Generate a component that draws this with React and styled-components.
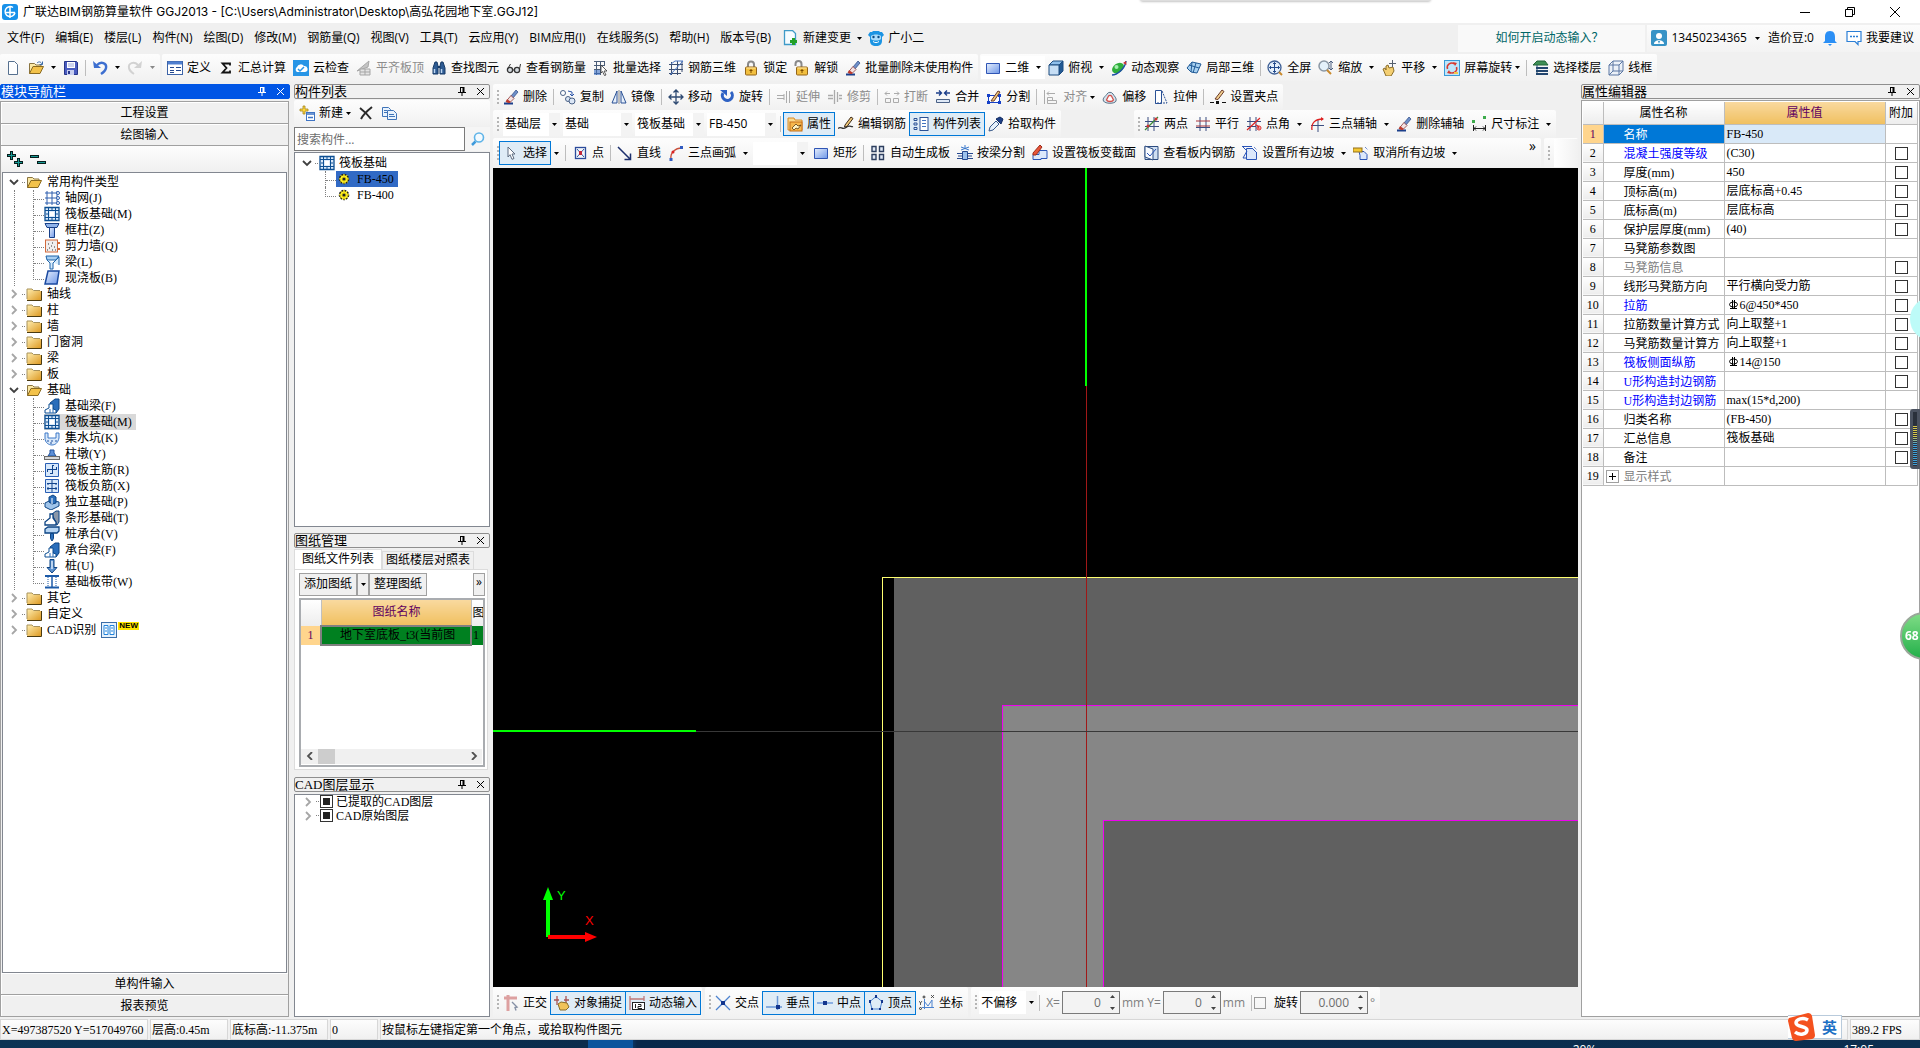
import React from "react";
import styled, { createGlobalStyle, css } from "styled-components";

const GlobalStyle = createGlobalStyle`
  * {
    box-sizing: border-box;
  }

  body {
    margin: 0;
    background: #f0f0f0;
    color: #000;
    font-family: "Open Sans", "Noto Sans CJK SC", sans-serif;
    font-size: 12px;
    line-height: 16px;
    overflow: hidden;
  }

  button, input, select {
    font: inherit;
    color: inherit;
    margin: 0;
    padding: 0;
    border: 0;
    border-radius: 0;
    background: none;
  }
`;

const songti = `"Liberation Serif", "Noto Sans CJK SC", serif`;
const captionFont = `Inter, "Noto Sans CJK SC", sans-serif`;

/* ---------- icons ---------- */

const page = <path d="M3.5 1.5h6l3 3v10h-9z" fill="#fdfeff" stroke="#56708f" />;
const brush = (
  <>
    <path d="M1 14.5h9" stroke="#1b3f8b" strokeWidth="2" />
    <path d="M13 1l2 2-5 6-2-2z" fill="#6e8fc9" stroke="#29467f" strokeWidth=".7" />
    <path d="M8 6.500l3 3-4 4-4-1z" fill="#f4e3e3" stroke="#8b3b3b" strokeWidth=".8" />
    <path d="M4 10l4 3-2 1-3-1z" fill="#c0392b" />
  </>
);
const gridLines = <path d="M3 1v14M8 1v14M13 1v14M1 3h14M1 8h14M1 13h14" stroke="#2e5fae" fill="none" />;
const raft = (
  <>
    <path d="M1 1.500h14v13H1z" fill="#dcebfb" stroke="#0d4f93" strokeWidth="1.300" />
    <path d="M4.500 1v14M11.500 1v14M1 4.500h14M1 11.500h14" stroke="#0d4f93" />
    <path d="M6 6h4v4H6z" fill="#fff" />
    <path d="M8 2v2M8 12v2M2 8h2M12 8h2" stroke="#0d4f93" />
  </>
);
const beam = (
  <>
    <path d="M6 5l5-4h4v10l-3 4z" fill="#2a6ebb" stroke="#0d4484" />
    <path d="M5 6h4v5l3 1v3H1v-3l4-2z" fill="#fff" stroke="#0d4f93" />
    <path d="M6 15v-4M9 15v-4" stroke="#2a6ebb" />
  </>
);
const padlock = (shackle) => (
  <>
    <path d={shackle} fill="none" stroke="#8a8a8a" strokeWidth="2" />
    <rect x="2.500" y="7" width="11" height="8" rx="1" fill="#f2bf3f" stroke="#94651a" />
    <path d="M8 9v4M6.500 10.500h3" stroke="#7a4a00" />
    <path d="M3.500 8h9" stroke="#ffe9a8" />
  </>
);
const openFolder = (
  <>
    <path d="M1.500 13.500v-10h5l1.500 1.500h5v2" fill="#fbe9a6" stroke="#8a7440" />
    <path d="M1.500 13.500L5 6.500h10.500l-3.500 7z" fill="#f3c24a" stroke="#8a6a20" />
  </>
);
const closedFolder = (
  <>
    <path d="M1 3h5l1.500 2H15v9H1z" fill="url(#folderFill)" />
    <path d="M1 13V3h5l1.500 1.500H14" fill="none" stroke="#a8925a" />
    <path d="M1 14.500h14.500V5" fill="none" stroke="#4a3a10" />
  </>
);

const icons = {
  app: (
    <>
      <rect x="0" y="0" width="16" height="16" rx="3" fill="#1791ea" />
      <path d="M8 2v12M3 8.500h10M11 3.500a5 5 0 1 0 2 5" fill="none" stroke="#fff" strokeWidth="1.500" />
    </>
  ),
  newFile: page,
  open: (
    <>
      {openFolder}
      <path d="M9 3c2-2 4-1 5 1M14.500 1.500V4.500h-3" fill="none" stroke="#3c6ba6" />
    </>
  ),
  save: (
    <>
      <path d="M1.500 1.500h12l1 1v12h-13z" fill="#4a5cc0" stroke="#27368a" />
      <rect x="4" y="2" width="8" height="6" fill="#fff" />
      <path d="M5 4h6M5 6h6" stroke="#9aa6dd" />
      <rect x="4" y="10" width="7" height="5" fill="#c8cff0" />
      <path d="M6 11v3" stroke="#27368a" strokeWidth="2" />
    </>
  ),
  undo: (
    <>
      <path d="M1 1l1 7h7z" fill="#3d6fd0" />
      <path d="M5 5c4-4 10-2 9 3-.5 3-2 4-5 6" fill="none" stroke="#3d6fd0" strokeWidth="2.400" />
    </>
  ),
  redo: (
    <>
      <path d="M15 1l-1 7H7z" fill="#d2d2d2" />
      <path d="M11 5C7 1 1 3 2 8c.5 3 2 4 5 6" fill="none" stroke="#d2d2d2" strokeWidth="2" />
    </>
  ),
  define: (
    <>
      <rect x=".5" y="1.500" width="15" height="13" fill="#fff" stroke="#3d64a8" />
      <path d="M1 3h14" stroke="#4f7fd0" strokeWidth="3" />
      <path d="M3 7.500h4M3 10.500h4M9 7.500h5M9 10.500h5M3 12.500h4" stroke="#24498f" />
    </>
  ),
  sigma: <path d="M12 5.500V3.500H4.500L8.500 8l-4 4.500H12v-2" fill="none" stroke="#111" strokeWidth="1.800" />,
  cloud: (
    <>
      <rect width="16" height="16" fill="#2795e6" />
      <path d="M4 12a3 3 0 0 1 0-5 4 4 0 0 1 7-1 3 3 0 0 1 1 6z" fill="#fff" />
      <path d="M5 9l2 2 4-4" fill="none" stroke="#2795e6" strokeWidth="1.500" />
    </>
  ),
  flatTop: (
    <>
      <path d="M1 11L13 1l-1 6z" fill="#c4c4c4" stroke="#a8a8a8" />
      <path d="M4 15V9h10v6zM4 12h10M9 9v6" fill="#e4e4e4" stroke="#a5a5a5" />
    </>
  ),
  find: (
    <>
      <path d="M4 2h2l1 4v8H2V8zM12 2h-2L9 6v8h5V8z" fill="#2e5b93" stroke="#163a66" />
      <path d="M3.500 9v4M10.500 9v4" stroke="#bdd6f2" strokeWidth="1.500" />
      <path d="M7 7h2" stroke="#163a66" strokeWidth="2" />
    </>
  ),
  glasses: (
    <>
      <circle cx="4" cy="10" r="2.600" fill="#d5dbe0" stroke="#333" strokeWidth="1.300" />
      <circle cx="11" cy="10" r="2.600" fill="#d5dbe0" stroke="#333" strokeWidth="1.300" />
      <path d="M1.500 9l3-5M13.500 9l1-5M6.500 10h2" fill="none" stroke="#333" />
    </>
  ),
  batchSelect: (
    <>
      <path d="M1 1.500h11M1 5.500h11M1 9.500h7M1 13.500h7M3.500 1v14M7.500 1v14M11.500 1v5" stroke="#4b5d78" />
      <path d="M1 10h6v5H1z" fill="#3b70c4" opacity=".6" />
      <path d="M8 5l6 6h-3l2 4-1.500.5-2-4L8 13z" fill="#fff" stroke="#333" strokeWidth=".8" />
    </>
  ),
  rebar3d: (
    <>
      <path d="M1 4.500h14M1 9.500h14M1 13.500h12M3.500 2v13M9.500 1v14M14 1v11" stroke="#3c4f72" />
      <path d="M2 15L15 1M3 4L7 1h8" fill="none" stroke="#4c78c4" />
    </>
  ),
  lock: padlock("M5 8V4.500a3 3 0 0 1 6 0V8"),
  unlock: padlock("M1.500 6V4a3 3 0 0 1 6 0V8"),
  brush,
  rect: <path d="M1.500 3.500h13v10h-13z" fill="url(#blueFill)" stroke="#2f55b5" />,
  cube: (
    <>
      <path d="M1 5l4-4h10l-4 4z" fill="#8fc0ec" stroke="#1d4c80" />
      <path d="M11 5l4-4v10l-4 4z" fill="#245a94" stroke="#1d4c80" />
      <path d="M1 5h10v10H1z" fill="#c6def5" stroke="#1d4c80" />
    </>
  ),
  orbit: (
    <>
      <ellipse cx="7" cy="8" rx="6.500" ry="4.500" transform="rotate(-35 7 8)" fill="#2fae3c" />
      <circle cx="5.500" cy="7" r="2" fill="#a7eeb0" />
      <path d="M1 15C6 15 14 9 15 1" fill="none" stroke="#1e4ea8" strokeWidth="1.500" />
      <path d="M12 3l3-2 .5 4z" fill="#c33" />
    </>
  ),
  part3d: (
    <>
      <path d="M1 8l5-6 9 2-4 9-6-1z" fill="#a8d1f1" stroke="#205a96" />
      <path d="M6 2L5 12M10 3l-3 10M3 5l10 3" stroke="#205a96" fill="none" />
    </>
  ),
  fullscreen: (
    <>
      <circle cx="7.500" cy="7.500" r="6.500" fill="#e4effa" stroke="#3e5f95" strokeWidth="1.300" />
      <path d="M7.500 2.500v10M2.500 7.500h10M6 4l1.500-1.500L9 4M6 11l1.500 1.500L9 11M4 6L2.500 7.500 4 9M11 6l1.500 1.500L11 9" fill="none" stroke="#234a8c" />
      <path d="M12 12l3 3" stroke="#c98a2d" strokeWidth="2" />
    </>
  ),
  zoom: (
    <>
      <circle cx="6" cy="6" r="5" fill="#e4f1fa" stroke="#8b98a5" strokeWidth="1.500" />
      <path d="M9 10l4 4" stroke="#c98a2d" strokeWidth="2" />
      <path d="M13 1v9M11 3l2-2 2 2M11 8l2 2 2-2" fill="none" stroke="#4a5f80" />
    </>
  ),
  pan: (
    <>
      <path d="M2 9l2-1 1 2V6l2-1 1 3 4-1 1 4-3 5H5z" fill="#f4cf72" stroke="#8a6d28" />
      <path d="M11.500 0v7M8 3.500h7" stroke="#55606e" />
    </>
  ),
  rotateScreen: (
    <>
      <rect x=".5" y=".5" width="15" height="15" fill="#bfe6fb" stroke="#3a9bd8" />
      <path d="M3.500 9a4.500 4.500 0 0 1 7-5M12.500 7a4.500 4.500 0 0 1-7 5" fill="none" stroke="#d8392f" strokeWidth="1.500" />
      <path d="M9 2l4 1-2 3zM7 14l-4-1 2-3z" fill="#d8392f" />
      <path d="M10 12h4v2h-4z" fill="#f1c84c" />
    </>
  ),
  floors: (
    <>
      <path d="M0 5l4-4h8l3 4z" fill="#3f8f55" stroke="#236438" />
      <path d="M3 8h12M3 11h12M3 14h12" stroke="#23466f" strokeWidth="2" />
      <path d="M4 5v10" stroke="#23466f" />
    </>
  ),
  wire: (
    <path d="M1 5h10v10H1zM5 1h10v10H5zM1 5l4-4M11 5l4-4M11 15l4-4M1 15l4-4" fill="#e4edf8" fillOpacity=".6" stroke="#5a77a3" />
  ),
  copy: (
    <>
      <circle cx="3" cy="4" r="2.500" fill="#fff" stroke="#4a6186" />
      <circle cx="8" cy="10" r="2.500" fill="#dbe6f5" stroke="#4a6186" />
      <circle cx="12" cy="12" r="3" fill="#dbe6f5" stroke="#4a6186" />
      <path d="M8 2l4 1v3M10 5l2 2 2-2" fill="none" stroke="#2c55a8" />
    </>
  ),
  mirror: (
    <>
      <path d="M6 2v12H1zM10 2v12h5z" fill="#e7f0fb" stroke="#2a5195" />
      <path d="M8 1v14" stroke="#888" />
    </>
  ),
  move: <path d="M8 1v14M1 8h14M5.500 3.500L8 1l2.500 2.500M5.500 12.500L8 15l2.500-2.500M3.500 5.500L1 8l2.500 2.500M12.500 5.500L15 8l-2.500 2.500" fill="none" stroke="#2e4a72" strokeWidth="1.300" />,
  rotate: (
    <>
      <path d="M4 4a5 5 0 1 0 8-1" fill="none" stroke="#2f62c4" strokeWidth="3" />
      <path d="M1 1h7v6z" fill="#2f62c4" />
    </>
  ),
  extend: <path d="M1 6.500h7M1 9.500h7M8 5v6M10.500 2v12M13.500 2v12" fill="none" stroke="#ababab" />,
  trim: <path d="M1 6.500h5M1 9.500h5M7.500 1v14M10.500 3v10M12 6.500h3M12 9.500h3" fill="none" stroke="#ababab" strokeWidth="1.300" />,
  split: (
    <path d="M1 4.500h5M10 4.500h5M3 2.500L1 4.500l2 2M13 2.500l2 2-2 2M1.500 9.500h5v4h-5zM9.500 9.500h5v4h-5z" fill="none" stroke="#ababab" />
  ),
  merge: (
    <>
      <path d="M1 4h5M10 4h5M4 1.500L6.500 4 4 6.500M12 1.500L9.500 4 12 6.500" fill="none" stroke="#1d3f8a" strokeWidth="1.400" />
      <path d="M1.500 10.500h13v3h-13z" fill="#dfe9f7" stroke="#4a6186" />
    </>
  ),
  cut: (
    <>
      <path d="M2.500 6.500h11v7h-11z" fill="#fff" stroke="#1540c8" />
      <path d="M1 5h3v3H1zM12 5h3v3h-3zM1 12h3v3H1zM12 12h3v3h-3z" fill="#1540c8" />
      <path d="M5 12l7-10 2 1-6 9z" fill="#f0c878" stroke="#6b3a2a" />
    </>
  ),
  align: <path d="M1.500 1v14M4 4.500h8M6 2.500l-2 2 2 2M4.500 8.500h5v3h-5zM4.500 11.500h9v3h-9z" fill="none" stroke="#ababab" />,
  offset: (
    <>
      <path d="M5 5a3.500 3.500 0 0 1 6 0c1 2 4 4 3 7s-11 3-12.500 0S4 7 5 5z" fill="#d6e4ee" stroke="#5b7489" />
      <path d="M6.500 7a2 2 0 0 1 3 0l2 4c-1 2-6 2-7 0z" fill="#fff" stroke="#d2504b" strokeWidth="1.300" />
    </>
  ),
  stretch: (
    <>
      <path d="M2.500 1.500h6v13h-6z" fill="#fff" stroke="#2a5195" />
      <path d="M9 2l5 12H2" fill="none" stroke="#2a5195" strokeDasharray="2 1" />
    </>
  ),
  gripPoint: (
    <>
      <path d="M0 13.500h4M12 13.500h4" stroke="#111" />
      <rect x="6" y="12" width="3" height="3" fill="#111" />
      <path d="M5 10l7-9 2 1.500-6 8z" fill="#f1cf8e" stroke="#6b3a2a" />
    </>
  ),
  property: (
    <>
      <path d="M1 2h6l1 2h7v10H1z" fill="#fbd98b" stroke="#d88a28" />
      <rect x="3" y="6" width="12" height="9" fill="#f6b84e" stroke="#c66e16" />
      <path d="M5 12l4-4 2 2 3-1-3 4-2-1-2 2z" fill="#fff4c4" stroke="#5d3a0c" strokeWidth=".8" />
    </>
  ),
  pencil: (
    <>
      <path d="M0 12.500c3-3 4 2 8-1s5 0 7-1" fill="none" stroke="#333" strokeWidth="1.300" />
      <path d="M7 9l6-8 2 1.500-6 8-2.500.5z" fill="#f0c878" stroke="#3c2a1a" />
    </>
  ),
  list: (
    <>
      <path d="M1 2.500h3v2H1zM1 7h3v2H1zM1 11.500h3v2H1z" fill="none" stroke="#2a5195" />
      <rect x="7" y="1.500" width="8" height="13" fill="#fff" stroke="#2a5195" />
      <path d="M9 4.500h4M9 7.500h4M9 10.500h4" stroke="#4273c0" />
    </>
  ),
  dropper: (
    <>
      <path d="M1 15l1-4 6-6 3 3-6 6z" fill="#e7f1fb" stroke="#3a5a8a" />
      <path d="M8 3l5 5 2-5-3-2z" fill="#1f4288" stroke="#122b60" />
    </>
  ),
  twoPoint: (
    <>
      <path d="M4 1v14M10 1v14M1 5.500h14M1 10.500h14" stroke="#3a4d80" />
      <path d="M1 14L14 1" stroke="#3b8a35" strokeWidth="1.300" />
      <circle cx="4" cy="10" r="1.500" fill="#c33" />
      <circle cx="12" cy="3" r="1.500" fill="#c33" />
    </>
  ),
  parallel: (
    <>
      <path d="M5 1v14M11 1v14" stroke="#3a4d80" />
      <path d="M1 5h14M1 10h14" stroke="#a8343a" />
      <path d="M1 11.500h14" stroke="#3a4d80" />
    </>
  ),
  pointAngle: (
    <>
      <path d="M4 1v14M10 1v14M1 5.500h14M1 10.500h9" stroke="#3a4d80" />
      <path d="M1 14L14 2M9 9c3 0 4 2 4 4" fill="none" stroke="#d22" strokeWidth="1.200" />
      <circle cx="13" cy="12" r="2" fill="none" stroke="#d22" />
    </>
  ),
  arcAxis: (
    <>
      <path d="M9 4v12M2 9.500h13" stroke="#3a4d80" />
      <path d="M3 14C2 7 6 3 14 3" fill="none" stroke="#d22" strokeWidth="1.300" />
      <path d="M12 1l3 2-3 2z" fill="#d22" />
    </>
  ),
  dimension: (
    <>
      <path d="M2.500 9v6M14.500 9v6M3 12.500h11M5 10.500l-2 2 2 2M12 10.500l2 2-2 2" fill="none" stroke="#222" />
      <path d="M1 4h3v3H1zM12 0h3v3h-3z" fill="#3dab4c" />
    </>
  ),
  cursor: <path d="M5 2l7 7H9l2 4.500-2 .8-2-4.600L5 12z" fill="#fff" stroke="#5e6d80" />,
  point: (
    <>
      <rect x="3.500" y="2.500" width="10" height="11" fill="#f3f6fb" stroke="#2b4b9b" strokeWidth="1.300" />
      <path d="M5 4l7 8M12 4l-7 8" stroke="#33579c" />
      <rect x="7" y="6" width="3" height="4" fill="#c0273c" />
    </>
  ),
  line: <path d="M1 2l12 12M13.500 8.500v6h-6" fill="none" stroke="#1c2f6d" strokeWidth="1.500" />,
  arc: (
    <>
      <path d="M3 14C2 8 7 3 14 3" fill="none" stroke="#c8503c" strokeWidth="1.300" />
      <path d="M1.500 13h3v3h-3zM12 1h3v3h-3z" fill="#315ac0" />
      <circle cx="5" cy="7" r="1.500" fill="#d22" />
    </>
  ),
  autoSlab: <path d="M2 1.500h4v5H2zM9.500 1.500h4v5h-4zM2 9.500h4v5H2zM9.500 9.500h4v5h-4z" fill="#dfe8f5" stroke="#2d3e5e" strokeWidth="1.400" />,
  beamSplit: (
    <>
      <path d="M0 8.500h5M11 8.500h5M0 13.500h5M11 13.500h5M1 11h14" stroke="#26488f" />
      <path d="M5.500 6.500h5v8h-5z" fill="#9cc1ec" stroke="#26488f" />
      <path d="M8 0v4M4 2l8 3M12 2L4 5" stroke="#3a78cc" />
    </>
  ),
  section: (
    <>
      <path d="M1 9.500h6v-4h8v8H9v1H1z" fill="#dce8fb" stroke="#2a55b8" />
      <path d="M1 8L8 0l2 2-6 8H1z" fill="#e8553a" stroke="#9b2c1a" />
    </>
  ),
  slabRebar: (
    <>
      <path d="M2 1.500h13v13H2z" fill="#cfdff2" stroke="#2d4c80" />
      <path d="M2 1l8 3v11l-8-3z" fill="#f8fbff" stroke="#2d4c80" />
      <path d="M4 8l3 3 6-7" fill="none" stroke="#2a55b8" />
    </>
  ),
  slope: (
    <>
      <path d="M4.500 3.500h6l4 4v7h-10z" fill="#dce8fb" stroke="#2a55b8" />
      <path d="M0 1.500h10M1 2l4 4-4 7h4M10 3l5 5" fill="none" stroke="#2a55b8" />
      <path d="M12 2l3 3" stroke="#2a55b8" strokeDasharray="1 1" />
    </>
  ),
  slopeOff: (
    <>
      <path d="M6 6.500h5l3 3v5H7v-4z" fill="#dce8fb" stroke="#2a55b8" />
      <rect x="0" y="3" width="9" height="4" fill="#f4c733" stroke="#93701a" />
      <path d="M12 2l3 3" stroke="#2a55b8" strokeDasharray="1 1" />
    </>
  ),
  ortho: (
    <>
      <path d="M1 3h13M5 0v16" stroke="#dda0a0" strokeWidth="3" />
      <path d="M9 7l5 5-2 .5 1 3" fill="none" stroke="#8590a5" strokeWidth="1.400" />
    </>
  ),
  snap: (
    <>
      <path d="M3 1v9M12 1v8M0 5h5M10 5h5" stroke="#a85454" strokeWidth="1.300" />
      <path d="M4 9l3-2 6 1 2 4-3 3H6z" fill="#f0c35a" stroke="#8a6d28" />
    </>
  ),
  dynInput: (
    <>
      <path d="M1 1v14M15 1v5M1 4h14" stroke="#c07878" strokeWidth="1.300" />
      <rect x="3.500" y="7.500" width="12" height="7" fill="#fff" stroke="#222" />
      <path d="M6.500 9v4M9 9.500h3v2H9v2h4" fill="none" stroke="#222" />
    </>
  ),
  cross: (
    <>
      <path d="M1 1l14 14M15 1L1 15" stroke="#4d83cf" strokeWidth="1.300" />
      <rect x="6" y="6" width="4" height="4" fill="#13368e" />
    </>
  ),
  perp: (
    <>
      <path d="M11.500 1v14M0 12h16" stroke="#6a97d8" strokeWidth="1.500" />
      <rect x="10" y="10" width="4" height="4" fill="#13368e" />
    </>
  ),
  middle: (
    <>
      <path d="M0 8h16" stroke="#8bb0e4" strokeWidth="2" />
      <rect x="6" y="6" width="4" height="4" fill="#13368e" />
    </>
  ),
  vertex: (
    <>
      <path d="M8 1.500l6 5-2 7.500H4L2 6.500z" fill="none" stroke="#4d83cf" />
      <path d="M7 0h2v3H7zM1 5h2v3H1zM13 5h2v3h-2zM3 13h2v2H3zM11 13h2v2h-2z" fill="#13368e" />
    </>
  ),
  coord: (
    <>
      <path d="M5.500 4v10M3 12.500h12M5 6l4 5 4-6v8" fill="none" stroke="#4d83cf" />
      <circle cx="5" cy="2" r="1" fill="none" stroke="#333" />
      <path d="M12 0l3 3M15 0l-3 3M0 6l1.500 2L3 6M1.500 8v2" stroke="#333" strokeWidth=".8" fill="none" />
      <circle cx="1.500" cy="13.500" r="1" fill="none" stroke="#333" />
    </>
  ),
  newChange: (
    <>
      <path d="M1.500 .5h8l3 3v11h-11z" fill="#f6fcff" stroke="#3e9ac8" strokeWidth="1.300" />
      <path d="M10.500 8v7M7 11.500h7" stroke="#23a127" strokeWidth="3" />
    </>
  ),
  robot: (
    <>
      <path d="M0 5l2-3h2l1-1h6l1 1h2l2 3-2 2v4c0 3-2 5-6 5s-6-2-6-5V7z" fill="#1b94e3" />
      <path d="M3 6c2-2 8-2 10 0v3c-2 2-8 2-10 0z" fill="#a9dbfa" />
      <circle cx="5.500" cy="7" r="1.200" fill="#0a4e86" />
      <circle cx="10.500" cy="7" r="1.200" fill="#0a4e86" />
      <path d="M5 11.500c2 1.500 4 1.500 6 0" fill="none" stroke="#fff" />
    </>
  ),
  user: (
    <>
      <rect width="16" height="16" rx="2" fill="#3793c6" />
      <circle cx="8" cy="6" r="3" fill="#fff" />
      <path d="M3 14c0-5 10-5 10 0z" fill="#fff" />
      <path d="M7 11h2l-1 3z" fill="#3793c6" />
    </>
  ),
  bell: <path d="M8 1c4 0 5 3 5 6v4l2 2H1l2-2V7c0-3 1-6 5-6zM6 14h4l-2 2z" fill="#2b8ff5" />,
  bubble: (
    <>
      <path d="M1 1.500h14v10h-3v3l-3-3H1z" fill="#fff" stroke="#2b7fd6" strokeWidth="1.200" />
      <path d="M4 6.500h2M7 6.500h2M10 6.500h2" stroke="#2b7fd6" strokeWidth="1.500" />
    </>
  ),
  addItem: (
    <>
      <path d="M4 1h2v3h3v2H6v3H4V6H1V4h3z" fill="#ffd83d" stroke="#a5861c" strokeWidth=".8" />
      <rect x="7.500" y="7.500" width="8" height="8" fill="#fff" stroke="#3f74c4" />
      <path d="M8 9h7M9 12.500h5" stroke="#3f74c4" strokeWidth="1.500" />
    </>
  ),
  removeItem: <path d="M2 3c4 3 8 7 11 11M14 2C9 6 5 10 3 14" fill="none" stroke="#2a2a2a" strokeWidth="2" />,
  duplicate: (
    <>
      <path d="M1.500 2.500h6l2 2v7h-8z" fill="#e9f3fd" stroke="#3f74b8" />
      <path d="M6.500 5.500h6l3 3v6h-9z" fill="#e9f3fd" stroke="#3f74b8" />
      <path d="M8 9.500h5M8 11.500h6M3 5.500h3M3 7.500h3" stroke="#3f74b8" />
    </>
  ),
  search: (
    <>
      <circle cx="9" cy="6.500" r="4.500" fill="#f2faff" stroke="#5fb4e8" strokeWidth="1.600" />
      <path d="M5.500 10.500L2 14" stroke="#3f9bdc" strokeWidth="2.500" />
    </>
  ),
  expandAll: (
    <>
      <path d="M4.500 0v9M0 4.500h9M11.500 7v9M7 11.500h9" stroke="#071d1c" strokeWidth="3" />
      <path d="M4.500 1v7M1 4.500h7M11.500 8v7M8 11.500h7" stroke="#179a94" />
    </>
  ),
  collapseAll: (
    <>
      <path d="M0 5.500h9M7 11.500h9" stroke="#071d1c" strokeWidth="3" />
      <path d="M1 5.500h7M8 11.500h7" stroke="#179a94" />
    </>
  ),
  openFolder,
  folder: closedFolder,
  axisNet: (
    <>
      {gridLines}
      <circle cx="14" cy="3" r="1.500" fill="#fff" stroke="#2e5fae" />
      <circle cx="14" cy="8" r="1.500" fill="#fff" stroke="#2e5fae" />
      <circle cx="14" cy="13" r="1.500" fill="#fff" stroke="#2e5fae" />
    </>
  ),
  raft,
  column: (
    <>
      <path d="M1 1.500h14l-2 4H3z" fill="#8fb3ea" stroke="#173f88" />
      <path d="M5.500 5.500h5v10h-5z" fill="url(#blueFill)" stroke="#173f88" />
    </>
  ),
  wall: (
    <>
      <rect x="1.500" y="2" width="12" height="12" fill="#f0eeee" stroke="#d26a3c" />
      <path d="M4 6h1M8 5h1M10 9h1M5 10h1M7 8h1M8 12h1M11 12h1M3 12h1" stroke="#333" />
      <path d="M14 5h2M14 11h2" stroke="#d26a3c" strokeWidth="2" />
    </>
  ),
  beamTop: (
    <>
      <path d="M2 2h13l-3 4H3z" fill="#a9cff2" stroke="#1d63a8" />
      <path d="M3 6l3 3v6h3V9l6-6v8" fill="#d6ebfc" stroke="#1d63a8" />
    </>
  ),
  slab: <path d="M4 1h11l-2 13H1z" fill="url(#blueFill)" stroke="#1b4aa0" strokeWidth="1.500" />,
  beam,
  pit: (
    <>
      <path d="M1 3h3v5h8V3h3v5c-1 5-4 7-7 7S1 13 1 8z" fill="#d7e7f9" stroke="#3c78c8" />
      <path d="M3 11h2M7 11h2M11 11h2M6 13h2" stroke="#1f4f9c" />
    </>
  ),
  pier: (
    <>
      <path d="M6 4h4v3l2 3H4l2-3z" fill="#5d8fd6" stroke="#22539c" />
      <rect x=".5" y="10.500" width="15" height="3" fill="#d8d8d8" stroke="#6b6b6b" />
    </>
  ),
  mainRebar: (
    <>
      <path d="M1.500 1.500h13v13h-13z" fill="#d7e8fb" stroke="#2a5fb4" />
      <path d="M8.500 3v9M3 7.500h10M3.500 7v3M12.500 5v3M8 3.500h2M9 11.500H6" stroke="#12448c" fill="none" />
    </>
  ),
  negRebar: (
    <>
      <path d="M1.500 1.500h13v13h-13z" fill="#d7e8fb" stroke="#2a5fb4" />
      <path d="M3 5.500h10M3 10.500h10M8 2v12M4 5v2M12 5v2M4 9v3M12 9v3" stroke="#12448c" fill="none" />
    </>
  ),
  isolated: (
    <>
      <path d="M1 9l6-3 8 2v4l-8 4-6-3z" fill="#9fc4ea" stroke="#0d4484" />
      <path d="M5 3l4-2 3 2v6l-4 1-3-2z" fill="#2a6ebb" stroke="#0d4484" />
      <path d="M8 4v6" stroke="#fff" />
    </>
  ),
  strip: (
    <>
      <path d="M8 4l4-3h3v11l-2 3z" fill="#8a97a8" stroke="#0d4484" />
      <path d="M6 4h3v4l3 4v3H1v-3l5-4z" fill="#fff" stroke="#0d4484" strokeWidth="1.300" />
    </>
  ),
  cap: (
    <>
      <path d="M1 3l3-2h11v4l-2 2H1z" fill="#b7d5f3" stroke="#0d4484" strokeWidth="1.300" />
      <path d="M6.500 7.500h3v5L8 15l-1.500-2.500z" fill="#2a6ebb" stroke="#0d4484" />
    </>
  ),
  pile: (
    <>
      <path d="M6 1.500h4v8h3L8 15 3 9.500h3z" fill="#5d92cf" stroke="#0d4484" />
      <path d="M8 3v8" stroke="#dceafa" strokeWidth="1.500" />
    </>
  ),
  band: (
    <>
      <path d="M1 2h14M1 13.500h14" stroke="#1c5aa8" strokeWidth="2" />
      <path d="M4 3v10M12 3v10" stroke="#1c5aa8" strokeDasharray="1 1" />
      <path d="M8 3v10" stroke="#1c5aa8" strokeWidth="1.500" />
    </>
  ),
  cadDoc: (
    <>
      <rect x=".5" y=".5" width="15" height="15" fill="#e6f2fd" stroke="#3c6ea8" />
      <path d="M3 3.500h4v9H3zM9 3.500h4v9H9z" fill="#fff" stroke="#2183dc" />
      <path d="M4 6h2M4 9h2M10 6h2M10 9h2" stroke="#2183dc" />
    </>
  ),
  gear: (
    <>
      <circle cx="8" cy="8" r="4.500" fill="#ffee32" stroke="#222" strokeDasharray="2 1" strokeWidth="1.500" />
      <path d="M8 3v10M3 8h10M4.500 4.500l7 7M11.500 4.500l-7 7" stroke="#e8d800" />
      <circle cx="8" cy="8" r="1.600" fill="#222" />
    </>
  ),
};

const Svg = styled.svg`
  display: block;
  flex: none;
`;

const Icon = ({ name, size = 16 }) => (
  <Svg width={size} height={size} viewBox="0 0 16 16" fill="none" aria-hidden="true">
    {icons[name]}
  </Svg>
);

/* ---------- title and menu ---------- */

const Screen = styled.div`
  display: flex;
  flex-direction: column;
  height: 100vh;
`;

const TitleBar = styled.header`
  display: flex;
  align-items: center;
  gap: 5px;
  height: 23px;
  padding: 0 20px 0 2px;
  background: #fff;
  position: relative;
`;

const Title = styled.h1`
  flex: 1;
  margin: 0;
  font-family: ${captionFont};
  font-size: 12px;
  font-weight: 400;
`;

const DockedPopup = styled.div`
  position: absolute;
  top: -8px;
  left: 1141px;
  width: 289px;
  height: 9px;
  background: #ddd;
  box-shadow: 0 0 3px #888;
`;

const WindowButton = styled.button`
  width: 10px;
  height: 10px;
  margin-left: 30px;
`;

const MenuBar = styled.nav`
  display: flex;
  align-items: center;
  height: 30px;
  margin-bottom: 1px;
  padding-left: 2px;
  font-size: 12px;
`;

const MenuItem = styled.button`
  padding: 0 6px 0 5px;
  white-space: nowrap;
`;

const MenuExtras = styled.div`
  display: flex;
  flex: 1;
  align-items: center;
  gap: 6px;
  padding-left: 6px;
`;

const HintBox = styled.a`
  display: flex;
  align-items: center;
  justify-content: center;
  width: 187px;
  height: 27px;
  padding-right: 5px;
  background: #f9f9f9;
  color: #006666;
  font-family: ${songti};
  text-decoration: none;
`;

const Account = styled.div`
  display: flex;
  align-items: center;
  gap: 8px;
  height: 27px;
  margin-left: 2px;
  padding: 0 6px 0 4px;
  background: linear-gradient(#fcfcfc, #f3f3f3);
`;

/* ---------- tool bars ---------- */

const Bars = styled.div`
  display: flex;
  align-items: stretch;
  gap: ${(p) => p.$gap || 3}px;
  height: ${(p) => p.$height || 28}px;
  flex: none;
`;

const Strip = styled.div`
  display: flex;
  align-items: center;
  gap: 7px;
  flex: ${(p) => (p.$grow ? 1 : "none")};
  padding: 0 5px 0 ${(p) => (p.$grip ? 4 : 5)}px;
  border-radius: 2px;
  background: linear-gradient(#fdfdfd, #f1f1f1);
  min-width: 0;
`;

const Grip = styled.span`
  width: 2px;
  height: 15px;
  margin-right: -3px;
  background: repeating-linear-gradient(#b5b5b5 0 2px, transparent 2px 4px);
`;

const Divider = styled.span`
  width: 1px;
  height: 16px;
  margin: 0 -1px;
  background: #bdbdbd;
`;

const ToolButton = styled.button`
  display: flex;
  align-items: center;
  gap: 4px;
  height: 24px;
  white-space: nowrap;
  flex: none;

  &:disabled {
    color: #8c8c8c;
  }

  ${(p) =>
    p.$on &&
    css`
      margin: 0 -4px;
      padding: 0 3px;
      border: 1px solid #0078d7;
      background: #dfecf6;
    `}
`;

const ViewPicker = styled.span`
  display: flex;
  align-items: center;
  gap: 7px;
  height: 23px;
  margin: 0 -4px;
  padding: 0 4px;
  background: #fff;
`;

const ArrowButton = styled.button`
  width: 5px;
  height: 16px;
  flex: none;
  margin-left: ${(p) => (p.$close ? -4 : 0)}px;
  color: ${(p) => (p.$faded ? "#888" : "#000")};
`;

const Triangle = () => (
  <Svg width="5" height="3" viewBox="0 0 5 3" aria-hidden="true">
    <path d="M0 0h5L2.500 3z" fill="currentColor" />
  </Svg>
);

const Arrow = ({ close, faded }) => (
  <ArrowButton $close={close} $faded={faded} aria-label="更多">
    <Triangle />
  </ArrowButton>
);

const ComboFrame = styled.span`
  display: grid;
  grid-template-columns: 1fr 11px;
  align-items: center;
  flex: none;
  width: ${(p) => p.$width}px;
  height: 23px;
  margin-right: ${(p) => (p.$tight ? -4 : -2)}px;
  margin-left: ${(p) => (p.$pull ? -2 : 0)}px;
  background: linear-gradient(to left, #f3f3f3 11px, #fff 11px);

  svg {
    grid-area: 1 / 2;
    margin-left: 3px;
    pointer-events: none;
  }
`;

const ComboSelect = styled.select`
  grid-area: 1 / 1 / 2 / 3;
  appearance: none;
  width: 100%;
  height: 100%;
  padding-left: 2px;
  outline: none;
`;

const Combo = ({ label, value, ...rest }) => (
  <ComboFrame {...rest}>
    <ComboSelect aria-label={label} defaultValue={value}>
      <option>{value}</option>
    </ComboSelect>
    <Triangle />
  </ComboFrame>
);

const MoreButton = styled.button`
  align-self: flex-start;
  margin-left: auto;
  font-size: 14px;
`;

const EmptySlot = styled.span`
  align-self: stretch;
  width: 24px;
  margin: 1px -5px 1px 0;
  background: linear-gradient(to right, #fff, #f1f1f1);
`;

// "|" is a divider, "v" a drop arrow, "w" a drop arrow set close to its label
const Tools = ({ items }) =>
  items.map((item, i) => {
    if (item === "|") return <Divider key={i} />;
    if (item === "v" || item === "w") return <Arrow key={i} close={item === "w"} />;
    const [icon, text, state] = item;
    return (
      <ToolButton key={i} $on={state === "on"} disabled={state === "off"} aria-label={text || icon}>
        <Icon name={icon} />
        {text}
      </ToolButton>
    );
  });

const menus = [
  "文件(F)", "编辑(E)", "楼层(L)", "构件(N)", "绘图(D)", "修改(M)", "钢筋量(Q)", "视图(V)",
  "工具(T)", "云应用(Y)", "BIM应用(I)", "在线服务(S)", "帮助(H)", "版本号(B)",
];

const mainTools = [
  ["define", "定义"], ["sigma", "汇总计算"], ["cloud", "云检查"], ["flatTop", "平齐板顶", "off"],
  ["find", "查找图元"], ["glasses", "查看钢筋量"], ["batchSelect", "批量选择"], ["rebar3d", "钢筋三维"],
  ["lock", "锁定"], ["unlock", "解锁"], ["brush", "批量删除未使用构件"],
];

const viewTools = [
  ["cube", "俯视"], "v", ["orbit", "动态观察"], ["part3d", "局部三维"], "|", ["fullscreen", "全屏"],
  ["zoom", "缩放"], "v", ["pan", "平移"], "v", ["rotateScreen", "屏幕旋转"], "w", "|",
  ["floors", "选择楼层"], ["wire", "线框"],
];

const editTools = [
  ["brush", "删除"], "|", ["copy", "复制"], ["mirror", "镜像"], "|", ["move", "移动"], ["rotate", "旋转"], "|",
  ["extend", "延伸", "off"], ["trim", "修剪", "off"], "|", ["split", "打断", "off"], ["merge", "合并"],
  ["cut", "分割"], "|", ["align", "对齐", "off"], "w", ["offset", "偏移"], ["stretch", "拉伸"], "|",
  ["gripPoint", "设置夹点"],
];

const memberTools = [
  ["property", "属性", "on"], ["pencil", "编辑钢筋"], ["list", "构件列表", "on"], ["dropper", "拾取构件"],
];

const axisTools = [
  ["twoPoint", "两点"], ["parallel", "平行"], ["pointAngle", "点角"], "v", ["arcAxis", "三点辅轴"], "v",
  ["brush", "删除辅轴"], ["dimension", "尺寸标注"], "v",
];

const drawTools = [
  ["cursor", "选择", "on"], "v", "|", ["point", "点"], "|", ["line", "直线"], ["arc", "三点画弧"], "v",
];

const slabTools = [
  ["rect", "矩形"], "|", ["autoSlab", "自动生成板"], ["beamSplit", "按梁分割"], ["section", "设置筏板变截面"],
  ["slabRebar", "查看板内钢筋"], ["slope", "设置所有边坡"], "v", ["slopeOff", "取消所有边坡"], "v",
];

const snapTools = [["ortho", "正交"], ["snap", "对象捕捉", "on"], ["dynInput", "动态输入", "on"]];

const pointTools = [
  ["cross", "交点"], ["perp", "垂点", "on"], ["middle", "中点", "on"], ["vertex", "顶点", "on"], ["coord", "坐标"],
];

/* ---------- dock panels ---------- */

const Workspace = styled.main`
  display: flex;
  flex: 1;
  min-height: 0;
  padding-top: 3px;
`;

const Dock = styled.section`
  display: flex;
  flex-direction: column;
  flex: ${(p) => p.$grow || "none"};
  margin-top: ${(p) => p.$space || 0}px;
  min-height: 0;
`;

const DockTitle = styled.h2`
  display: flex;
  align-items: center;
  gap: 9px;
  height: 15px;
  flex: none;
  margin: 0 0 ${(p) => p.$space || 2}px;
  padding-right: 4px;
  border: 1px solid ${(p) => (p.$active ? "#0055e5" : "#8e8e8e")};
  border-radius: 2px;
  background: ${(p) => (p.$active ? "#0055e5" : "#f0f0f0")};
  color: ${(p) => (p.$active ? "#fff" : "#000")};
  font-family: ${songti};
  font-size: 13px;
  font-weight: 400;
  line-height: 13px;

  span {
    flex: 1;
  }

  button {
    width: 9px;
    height: 9px;
  }
`;

const PanelTitle = ({ children, ...rest }) => (
  <DockTitle {...rest}>
    <span>{children}</span>
    <button aria-label="固定">
      <Svg width="9" height="9" viewBox="0 0 9 9">
        <path d="M2.500 0v5M2 .5h4M0 5.500h8M4 6v3" stroke="currentColor" fill="none" />
        <path d="M5.500 0v5" stroke="currentColor" strokeWidth="2" />
      </Svg>
    </button>
    <button aria-label="关闭">
      <Svg width="9" height="9" viewBox="0 0 9 9">
        <path d="M1 1l7 7M8 1L1 8" stroke="currentColor" />
      </Svg>
    </button>
  </DockTitle>
);

const NavColumn = styled.aside`
  display: flex;
  flex-direction: column;
  width: 290px;
  flex: none;
  padding-bottom: 1px;
`;

const NavBody = styled.div`
  display: flex;
  flex-direction: column;
  flex: 1;
  min-height: 0;
  width: 289px;
  border: 1px solid #a0a0a0;
  border-bottom: 0;
`;

const NavSection = styled.button`
  height: 22px;
  flex: none;
  border-bottom: 1px solid #a0a0a0;
  background: #f0f0f0;
  box-shadow: inset 1px 1px #fff;
  font-family: ${songti};
`;

const NavTools = styled.div`
  display: flex;
  align-items: center;
  gap: 7px;
  height: 26px;
  flex: none;
  padding: 0 6px;
  background: linear-gradient(#fdfdfd, #f0f0f0);
`;

const TreeBox = styled.div`
  flex: 1;
  min-height: 0;
  margin: ${(p) => (p.$inset ? "0 1px" : 0)};
  padding-top: ${(p) => p.$top || 0}px;
  border: 1px solid #828790;
  background: #fff;
  font-family: ${songti};
  overflow: hidden;
`;

const Tree = styled.ul`
  margin: 0;
  padding: 0;
  list-style: none;
`;

const TreeRow = styled.li`
  display: flex;
  align-items: center;
  height: ${(p) => p.$height || 16}px;
  padding-left: ${(p) => p.$indent}px;
  white-space: nowrap;
`;

const Twisty = styled.button`
  width: 10px;
  height: 10px;
  margin-right: 3px;
  color: ${(p) => (p.$open ? "#404040" : "#a6a6a6")};
`;

const Stub = styled.span`
  width: 3px;
  margin-right: 1px;
  border-top: 1px dotted #808080;
`;

const Rail = styled.span`
  align-self: stretch;
  width: 19px;
  border-left: 1px dotted #808080;
`;

const Elbow = styled.span`
  align-self: stretch;
  width: 11px;
  border-left: ${(p) => (p.$last ? 0 : "1px dotted #808080")};

  &::before {
    content: "";
    display: block;
    height: 9px;
    border-bottom: 1px dotted #808080;
    border-left: ${(p) => (p.$last ? "1px dotted #808080" : 0)};
  }
`;

const TreeLabel = styled.span`
  display: flex;
  align-items: center;
  gap: ${(p) => p.$gap || 5}px;
  height: 100%;
  padding-right: ${(p) => (p.$bg ? 4 : 0)}px;
  background: ${(p) => p.$bg || "none"};
`;

const NewTag = styled.em`
  align-self: flex-start;
  margin-left: -4px;
  padding: 0 1px;
  background: #ffe600;
  font-family: "Liberation Sans", sans-serif;
  font-size: 8px;
  font-style: normal;
  font-weight: 700;
  line-height: 8px;
`;

const Toggle = ({ open }) => (
  <Twisty $open={open} aria-label={open ? "折叠" : "展开"}>
    <Svg width="10" height="10" viewBox="0 0 10 10">
      <path d={open ? "M1 3l4 4 4-4" : "M3 1l4 4-4 4"} fill="none" stroke="currentColor" strokeWidth="1.800" />
    </Svg>
  </Twisty>
);

const navTree = [
  {
    name: "常用构件类型",
    items: [
      ["axisNet", "轴网(J)"], ["raft", "筏板基础(M)"], ["column", "框柱(Z)"], ["wall", "剪力墙(Q)"],
      ["beamTop", "梁(L)"], ["slab", "现浇板(B)"],
    ],
  },
  { name: "轴线" },
  { name: "柱" },
  { name: "墙" },
  { name: "门窗洞" },
  { name: "梁" },
  { name: "板" },
  {
    name: "基础",
    selected: 1,
    items: [
      ["beam", "基础梁(F)"], ["raft", "筏板基础(M)"], ["pit", "集水坑(K)"], ["pier", "柱墩(Y)"],
      ["mainRebar", "筏板主筋(R)"], ["negRebar", "筏板负筋(X)"], ["isolated", "独立基础(P)"],
      ["strip", "条形基础(T)"], ["cap", "桩承台(V)"], ["beam", "承台梁(F)"], ["pile", "桩(U)"],
      ["band", "基础板带(W)"],
    ],
  },
  { name: "其它" },
  { name: "自定义" },
  { name: "CAD识别", isNew: true },
];

const NavTree = () => (
  <Tree>
    {navTree.map((group) => (
      <React.Fragment key={group.name}>
        <TreeRow $indent={6}>
          <Toggle open={!!group.items} />
          <Stub />
          <TreeLabel>
            <Icon name={group.items ? "openFolder" : "folder"} />
            {group.name}
            {group.isNew && (
              <>
                <Icon name="cadDoc" />
                <NewTag>NEW</NewTag>
              </>
            )}
          </TreeLabel>
        </TreeRow>
        {(group.items || []).map(([icon, text], i) => (
          <TreeRow key={text} $indent={11}>
            <Rail />
            <Elbow $last={i === group.items.length - 1} />
            <TreeLabel $bg={group.selected === i ? "#d9d9d9" : null}>
              <Icon name={icon} />
              {text}
            </TreeLabel>
          </TreeRow>
        ))}
      </React.Fragment>
    ))}
  </Tree>
);

/* ---------- second column ---------- */

const ListColumn = styled.aside`
  display: flex;
  flex-direction: column;
  width: 196px;
  flex: none;
  margin: 0 3px 1px 4px;
`;

const SearchRow = styled.div`
  display: flex;
  align-items: center;
  justify-content: space-between;
  height: 24px;
  flex: none;
  margin: 1px 0;
  padding-right: 4px;
  background: #f5f5f5;
`;

const SearchInput = styled.input`
  width: 171px;
  height: 24px;
  padding: 0 2px;
  border: 1px solid #7a7a7a;
  background: #fff;
  font-size: 12px;

  &::placeholder {
    color: #6d6d6d;
    opacity: 1;
  }
`;

const TabRow = styled.div`
  display: flex;
  align-items: flex-end;
  height: 20px;
  font-family: ${songti};
`;

const Tab = styled.button`
  height: ${(p) => (p.$active ? 20 : 18)}px;
  padding: 0 ${(p) => (p.$active ? 7 : 3)}px;
  border: 1px solid #dcdcdc;
  border-bottom: 0;
  background: ${(p) => (p.$active ? "#fff" : "#f0f0f0")};
  white-space: nowrap;
`;

const SheetPage = styled.div`
  display: flex;
  flex-direction: column;
  height: 201px;
  margin: 0 2px 7px 0;
  padding: 3px 2px 2px 4px;
  border: 1px solid #dcdcdc;
  background: #fff;
`;

const SheetTools = styled.div`
  display: flex;
  height: 23px;
  margin-bottom: 2px;
`;

const SheetButton = styled.button`
  width: ${(p) => p.$width}px;
  margin-left: ${(p) => (p.$end ? "auto" : "0")};
  padding: ${(p) => (p.$end ? "0 0 6px" : 0)};
  border: 1px solid #a0a0a0;
  background: #f0f0f0;
  white-space: nowrap;

  svg {
    margin: auto;
  }
`;

const SheetGrid = styled.div`
  display: flex;
  flex-direction: column;
  justify-content: space-between;
  flex: 1;
  padding: 0 1px 1px 0;
  border: 2px solid #a9acb0;
  overflow: hidden;
`;

const SheetTable = styled.table`
  width: 230px;
  table-layout: fixed;
  border-collapse: collapse;
  font-family: ${songti};

  th, td {
    padding: 0;
    font-weight: 400;
    white-space: nowrap;
    overflow: hidden;
  }

  thead th {
    height: 26px;
    border-right: 1px solid #c0c0c0;
    background: linear-gradient(#fff, #ededed);
    text-align: left;
    padding-left: 1px;
  }

  thead th:nth-child(2) {
    background: linear-gradient(#f9d99f, #f0c060);
    color: #600060;
    text-align: center;
  }

  tbody th {
    height: 19px;
    background: #ffd58d;
    color: #600060;
  }

  tbody td {
    background: #008020;
    padding-left: 1px;
  }

  tbody td:nth-child(2) {
    padding-left: 18px;
    border: 2px solid #808080;
  }
`;

const ScrollTrack = styled.div`
  display: flex;
  align-items: center;
  height: 15px;
  background: #f0f0f0;
  color: #505050;

  button:last-child {
    margin-left: auto;
  }
`;

const ScrollThumb = styled.div`
  width: 17px;
  height: 15px;
  background: #cdcdcd;
`;

const ScrollButton = styled.button`
  width: 17px;

  svg {
    margin: auto;
  }
`;

const Chevron = ({ d }) => (
  <Svg width="8" height="8" viewBox="0 0 8 8">
    <path d={d} fill="none" stroke="currentColor" strokeWidth="1.800" />
  </Svg>
);

const LayerCheck = styled.input`
  appearance: none;
  width: 13px;
  height: 13px;
  border: 1px solid #333;
  background: #fff;
  box-shadow: inset 0 0 0 2px #fff, inset 0 0 0 10px #222;
`;

/* ---------- drawing area ---------- */

const CenterColumn = styled.section`
  display: flex;
  flex-direction: column;
  flex: 1;
  min-width: 0;
  margin-right: 3px;
`;

const Viewport = styled.svg`
  display: block;
  flex: 1;
  width: 100%;
  min-height: 0;
  background: #000;
`;

const Model = () => (
  <Viewport viewBox="0 0 1085 819" preserveAspectRatio="xMinYMin slice" role="img" aria-label="绘图区">
    <g shapeRendering="crispEdges" fill="none">
      <path d="M401 409h684v410H401z" fill="#606060" />
      <path d="M509 537h576v282H509z" fill="#868686" />
      <path d="M610 652h475v167H610z" fill="#606060" />
      <path d="M389.500 819V409.500H1085" stroke="#ffff70" />
      <path d="M509.500 819V537.500H1085M610.500 819V652.500H1085" stroke="#f000f0" />
      <path d="M593.500 218V819" stroke="#a01818" />
      <path d="M203 563.500H1085" stroke="#383838" />
      <path d="M593 0v218M0 563h203" stroke="#00ff00" strokeWidth="2" />
      <path d="M55 769V730" stroke="#00ff00" strokeWidth="4" />
      <path d="M55 769h40" stroke="#ff0000" strokeWidth="4" />
    </g>
    <path d="M55 719l5 13H50z" fill="#00ff00" />
    <path d="M104 769l-12-5v10z" fill="#ff0000" />
    <text x="64" y="732" fill="#00ff00" fontSize="13" fontFamily="Liberation Sans">Y</text>
    <text x="92" y="757" fill="#ff0000" fontSize="13" fontFamily="Liberation Sans">X</text>
  </Viewport>
);

const Spinner = styled.span`
  display: flex;
  align-items: center;
  width: ${(p) => p.$width}px;
  height: 23px;
  margin: 0 -5px;
  padding-right: 4px;
  border: 1px solid #7a7a7a;
  background: #f3f3f3;
  color: #6d6d6d;

  input {
    flex: 1;
    min-width: 0;
    padding-right: 9px;
    text-align: right;
  }

  svg {
    color: #444;
  }
`;

const NumberBox = ({ label, value, width }) => (
  <Spinner $width={width}>
    <input aria-label={label} defaultValue={value} />
    <Svg width="5" height="15" viewBox="0 0 5 15">
      <path d="M0 3h5L2.500 0zM0 12h5L2.500 15z" fill="currentColor" />
    </Svg>
  </Spinner>
);

const Muted = styled.span`
  color: #808080;
`;

const RotateLabel = styled.label`
  display: flex;
  align-items: center;
  gap: 8px;
  margin-left: -4px;

  input {
    appearance: none;
    width: 12px;
    height: 12px;
    border: 1px solid #9a9a9a;
  }
`;

/* ---------- property table ---------- */

const PropColumn = styled.aside`
  display: flex;
  flex-direction: column;
  width: 339px;
  flex: none;
  padding-bottom: 1px;
`;

const PropBox = styled.div`
  flex: 1;
  min-height: 0;
  padding: 1px;
  border: 1px solid #a0a0a0;
  background: #fff;
`;

const PropTable = styled.table`
  width: 334px;
  table-layout: fixed;
  border-collapse: collapse;
  font-family: ${songti};
  line-height: 14px;

  th, td {
    height: 19px;
    padding: 0;
    border-right: 1px solid #bdbdbd;
    border-bottom: 1px solid #bdbdbd;
    font-weight: 400;
    white-space: nowrap;
    overflow: hidden;
  }

  thead th {
    height: 22px;
    background: linear-gradient(#fff, #ededed);
  }

  thead th:nth-child(3) {
    background: linear-gradient(#f9d99f, #f0c060);
    color: #600060;
  }
`;

const RowNumber = styled.th`
  background: ${(p) => (p.$current ? "#ffd58d" : "linear-gradient(#fff, #ededed)")};
  color: ${(p) => (p.$current ? "#600060" : "#000")};
`;

const nameColors = { link: "#0000ff", off: "#808080", current: "#fff" };

const NameCell = styled.td`
  && {
    padding: 2px 0 0 20px;
  }
  background: ${(p) => (p.$tone === "current" ? "#0078d7" : "#fff")};
  color: ${(p) => nameColors[p.$tone] || "#000"};
`;

const ValueCell = styled.td`
  && {
    padding-left: 2px;
  }
  background: ${(p) => (p.$current ? "#d9e9f8" : "#fff")};
`;

const ExtraCell = styled.td`
  text-align: center;

  input {
    appearance: none;
    display: block;
    width: 13px;
    height: 13px;
    margin: 1px auto 0;
    border: 1px solid #333;
    background: #fff;
  }
`;

const PlusBox = styled.button`
  float: left;
  width: 13px;
  height: 13px;
  margin-left: -18px;
  border: 1px solid #a0a0a0;

  svg {
    margin: auto;
  }
`;

const properties = [
  ["名称", "FB-450", "current", false],
  ["混凝土强度等级", "(C30)", "link", true],
  ["厚度(mm)", "450", "", true],
  ["顶标高(m)", "层底标高+0.45", "", true],
  ["底标高(m)", "层底标高", "", true],
  ["保护层厚度(mm)", "(40)", "", true],
  ["马凳筋参数图", "", "", false],
  ["马凳筋信息", "", "off", true],
  ["线形马凳筋方向", "平行横向受力筋", "", true],
  ["拉筋", "⌀6@450*450", "link", true],
  ["拉筋数量计算方式", "向上取整+1", "", true],
  ["马凳筋数量计算方", "向上取整+1", "", true],
  ["筏板侧面纵筋", "⌀14@150", "link", true],
  ["U形构造封边钢筋", "", "link", true],
  ["U形构造封边钢筋", "max(15*d,200)", "link", false],
  ["归类名称", "(FB-450)", "", true],
  ["汇总信息", "筏板基础", "", true],
  ["备注", "", "", true],
  ["显示样式", "", "off", false],
];

const RebarValue = styled.span`
  display: flex;
  align-items: center;
  gap: 2px;
  padding-left: 2px;
`;

// rebar grade mark: a ring crossed by two uprights and a base line
const PropValue = ({ text }) =>
  text.startsWith("⌀") ? (
    <RebarValue>
      <Svg width="9" height="10" viewBox="0 0 9 10">
        <path d="M3.500 0v9M5.500 0v9M1 8.500h7" fill="none" stroke="#000" />
        <ellipse cx="4.500" cy="4.500" rx="4" ry="2.500" fill="none" stroke="#000" />
      </Svg>
      {text.slice(1)}
    </RebarValue>
  ) : (
    text
  );

/* ---------- bottom ---------- */

const StatusBar = styled.footer`
  display: flex;
  gap: 2px;
  height: 22px;
  flex: none;
  padding-top: 1px;
  font-family: ${songti};
  position: relative;
`;

const StatusField = styled.div`
  display: flex;
  align-items: center;
  flex: ${(p) => (p.$width ? "none" : 1)};
  width: ${(p) => (p.$width ? p.$width + "px" : "auto")};
  padding-left: 1px;
  border: 1px solid #d7d7d7;
  background: linear-gradient(#fdfdfd, #f0f0f0);
  white-space: nowrap;
`;

const InputMethod = styled.div`
  position: absolute;
  right: 78px;
  bottom: 1px;
  display: flex;
  align-items: center;
  gap: 6px;
  height: 24px;
  padding-right: 4px;
  border: 1px solid #b9cbdc;
  border-left: 0;
  background: #fff;
  color: #1d70c4;
  font-family: "Noto Sans CJK SC", sans-serif;
  font-size: 15px;
  font-weight: 700;
`;

const TaskBar = styled.div`
  display: flex;
  height: 8px;
  flex: none;
  padding: 2px 46px 0 0;
  gap: 247px;
  justify-content: flex-end;
  background: linear-gradient(to right, #0b3354 0, #0a2c4c 588px, #0a549c 588px, #0a549c 633px, #0a3562 633px, #08284a 637px, #0b2f50);
  color: #fff;
  overflow: hidden;
`;

const GaugeBall = styled.div`
  position: fixed;
  top: 612px;
  right: -28px;
  width: 48px;
  height: 48px;
  padding-left: 3px;
  border: 2px solid #9aa79a;
  border-radius: 50%;
  background: linear-gradient(#7fdc86, #23b04a);
  color: #fff;
  font-weight: 700;
  line-height: 44px;
`;

const MintBall = styled.div`
  position: fixed;
  top: 297px;
  right: -34px;
  width: 44px;
  height: 44px;
  border-radius: 50%;
  background: #bdfbf8;
`;

const MeterTab = styled.div`
  position: fixed;
  top: 409px;
  right: 0;
  width: 10px;
  height: 60px;
  border: 3px solid #4b5260;
  border-radius: 3px 0 0 3px;
  background:
    repeating-linear-gradient(transparent 0 1px, #2a303b 1px 2px),
    linear-gradient(#2a303b 25%, #d9c84a 25% 45%, #3fa0d8 60%);
`;

const windowButtons = [
  ["最小化", "M0 5.500h10"],
  ["还原", "M.5 2.500h7v7h-7zM2.500 2V.5h7v7H8"],
  ["关闭", "M0 0l10 10M10 0L0 10"],
];

const Gradients = () => (
  <defs>
    <linearGradient id="blueFill" x1="0" y1="0" x2="1" y2="1">
      <stop offset="0" stopColor="#e6effd" />
      <stop offset="1" stopColor="#6e97e8" />
    </linearGradient>
    <linearGradient id="folderFill" x1="0" y1="0" x2="1" y2="1">
      <stop offset="0" stopColor="#ffeeb0" />
      <stop offset="1" stopColor="#dd9a24" />
    </linearGradient>
  </defs>
);

const App = () => (
  <Screen>
    <GlobalStyle />
    <Svg width="0" height="0" aria-hidden="true">
      <Gradients />
    </Svg>

    <TitleBar>
      <Icon name="app" />
      <Title>广联达BIM钢筋算量软件 GGJ2013 - [C:\Users\Administrator\Desktop\高弘花园地下室.GGJ12]</Title>
      <DockedPopup />
      {windowButtons.map(([label, d]) => (
        <WindowButton key={label} aria-label={label}>
          <Svg width="10" height="10" viewBox="0 0 10 10">
            <path d={d} fill="none" stroke="#000" />
          </Svg>
        </WindowButton>
      ))}
    </TitleBar>

    <MenuBar>
      {menus.map((menu) => (
        <MenuItem key={menu}>{menu}</MenuItem>
      ))}
      <MenuExtras>
        <ToolButton>
          <Icon name="newChange" />
          新建变更
        </ToolButton>
        <Arrow />
        <ToolButton>
          <Icon name="robot" />
          广小二
        </ToolButton>
      </MenuExtras>
      <HintBox href="#help">如何开启动态输入？</HintBox>
      <Account>
        <ToolButton>
          <Icon name="user" />
          13450234365
        </ToolButton>
        <Arrow />
        <span>造价豆:0</span>
        <Icon name="bell" />
        <ToolButton>
          <Icon name="bubble" />
          我要建议
        </ToolButton>
      </Account>
    </MenuBar>

    <Bars $height={27} $gap={2}>
      <Strip>
        <Tools items={[["newFile"], ["open"], "v", ["save"], "|", ["undo"], "v"]} />
        <ToolButton aria-label="恢复">
          <Icon name="redo" />
        </ToolButton>
        <Arrow faded />
      </Strip>
      <Strip>
        <Tools items={mainTools} />
      </Strip>
      <Strip>
        <ViewPicker>
          <ToolButton>
            <Icon name="rect" />
            二维
          </ToolButton>
          <Arrow />
        </ViewPicker>
        <Tools items={viewTools} />
      </Strip>
    </Bars>

    <Workspace>
      <NavColumn>
        <PanelTitle $active>模块导航栏</PanelTitle>
        <NavBody>
          <NavSection>工程设置</NavSection>
          <NavSection>绘图输入</NavSection>
          <NavTools>
            <ToolButton aria-label="全部展开">
              <Icon name="expandAll" />
            </ToolButton>
            <ToolButton aria-label="全部折叠">
              <Icon name="collapseAll" />
            </ToolButton>
          </NavTools>
          <TreeBox $inset $top={1}>
            <NavTree />
          </TreeBox>
          <NavSection>单构件输入</NavSection>
          <NavSection>报表预览</NavSection>
        </NavBody>
      </NavColumn>

      <ListColumn>
        <Dock $grow="5 1 72px">
          <PanelTitle $space={1}>构件列表</PanelTitle>
          <Bars $height={26}>
            <Strip $grow>
              <ToolButton>
                <Icon name="addItem" />
                新建
              </ToolButton>
              <Arrow close />
              <Tools items={[["removeItem"], ["duplicate"]]} />
            </Strip>
          </Bars>
          <SearchRow>
            <SearchInput aria-label="搜索构件" placeholder="搜索构件..." />
            <ToolButton aria-label="搜索">
              <Icon name="search" />
            </ToolButton>
          </SearchRow>
          <TreeBox $top={2}>
            <Tree>
              <TreeRow $indent={7}>
                <Toggle open />
                <Stub />
                <TreeLabel $gap={4}>
                  <Icon name="raft" />
                  筏板基础
                </TreeLabel>
              </TreeRow>
              {["FB-450", "FB-400"].map((name, i) => (
                <TreeRow key={name} $indent={30}>
                  <Elbow $last={i === 1} />
                  <TreeLabel $bg={i === 0 ? "#316ac5" : null}>
                    <Icon name="gear" />
                    {name}
                  </TreeLabel>
                </TreeRow>
              ))}
            </Tree>
          </TreeBox>
        </Dock>

        <Dock $space={6}>
          <PanelTitle $space={1}>图纸管理</PanelTitle>
          <TabRow role="tablist">
            <Tab role="tab" aria-selected="true" $active>图纸文件列表</Tab>
            <Tab role="tab" aria-selected="false">图纸楼层对照表</Tab>
          </TabRow>
          <SheetPage>
            <SheetTools>
              <SheetButton $width={58}>添加图纸</SheetButton>
              <SheetButton $width={12} aria-label="更多">
                <Triangle />
              </SheetButton>
              <SheetButton $width={58}>整理图纸</SheetButton>
              <SheetButton $width={12} $end>»</SheetButton>
            </SheetTools>
            <SheetGrid>
              <SheetTable>
                <colgroup>
                  <col width="20" />
                  <col width="150" />
                  <col />
                </colgroup>
                <thead>
                  <tr>
                    <th />
                    <th>图纸名称</th>
                    <th>图</th>
                  </tr>
                </thead>
                <tbody>
                  <tr>
                    <th>1</th>
                    <td>地下室底板_t3(当前图</td>
                    <td>1</td>
                  </tr>
                </tbody>
              </SheetTable>
              <ScrollTrack>
                <ScrollButton aria-label="向左">
                  <Chevron d="M6 0L2 4l4 4" />
                </ScrollButton>
                <ScrollThumb />
                <ScrollButton aria-label="向右">
                  <Chevron d="M2 0l4 4-4 4" />
                </ScrollButton>
              </ScrollTrack>
            </SheetGrid>
          </SheetPage>
        </Dock>

        <Dock $grow="3 1 18px">
          <PanelTitle>CAD图层显示</PanelTitle>
          <TreeBox>
            <Tree>
              {["已提取的CAD图层", "CAD原始图层"].map((name) => (
                <TreeRow key={name} $indent={8} $height={14}>
                  <Toggle />
                  <Stub />
                  <TreeLabel as="label" $gap={3}>
                    <LayerCheck type="checkbox" />
                    {name}
                  </TreeLabel>
                </TreeRow>
              ))}
            </Tree>
          </TreeBox>
        </Dock>
      </ListColumn>

      <CenterColumn>
        <Bars $height={26}>
          <Strip $grip>
            <Grip />
            <Tools items={editTools} />
          </Strip>
        </Bars>
        <Bars $gap={73}>
          <Strip $grip>
            <Grip />
            <Combo label="楼层" value="基础层" $width={57} $tight />
            <Combo label="构件大类" value="基础" $width={69} $tight />
            <Combo label="构件类型" value="筏板基础" $width={69} $tight />
            <Combo label="构件" value="FB-450" $width={69} />
            <Divider />
            <Tools items={memberTools} />
          </Strip>
          <Strip $grip>
            <Grip />
            <Tools items={axisTools} />
          </Strip>
        </Bars>
        <Bars $height={30}>
          <Strip $grip $grow>
            <Grip />
            <Tools items={drawTools} />
            <Combo label="画弧方式" value="" $width={55} $pull />
            <Tools items={slabTools} />
            <MoreButton aria-label="更多工具">»</MoreButton>
          </Strip>
          <Strip $grip>
            <Grip />
            <EmptySlot />
          </Strip>
        </Bars>
        <Model />
        <Bars $height={31}>
          <Strip $grip>
            <Grip />
            <Tools items={snapTools} />
          </Strip>
          <Strip $grip>
            <Grip />
            <Tools items={pointTools} />
          </Strip>
          <Strip $grip>
            <Grip />
            <Combo label="偏移方式" value="不偏移" $width={58} $pull $tight />
            <Divider />
            <Muted>X=</Muted>
            <NumberBox label="X" value="0" width={58} />
            <Muted>mm Y=</Muted>
            <NumberBox label="Y" value="0" width={58} />
            <Muted>mm</Muted>
            <Divider />
            <RotateLabel>
              <input type="checkbox" />
              旋转
            </RotateLabel>
            <NumberBox label="旋转角度" value="0.000" width={68} />
            <Muted>°</Muted>
          </Strip>
        </Bars>
      </CenterColumn>

      <PropColumn>
        <PanelTitle $space={1}>属性编辑器</PanelTitle>
        <PropBox>
          <PropTable>
            <colgroup>
              <col width="20" />
              <col width="121" />
              <col width="161" />
              <col width="32" />
            </colgroup>
            <thead>
              <tr>
                <th />
                <th>属性名称</th>
                <th>属性值</th>
                <th>附加</th>
              </tr>
            </thead>
            <tbody>
              {properties.map(([name, value, tone, extra], i) => (
                <tr key={i}>
                  <RowNumber $current={i === 0}>{i + 1}</RowNumber>
                  <NameCell $tone={tone}>
                    {name === "显示样式" && (
                      <PlusBox aria-label="展开">
                        <Svg width="7" height="7" viewBox="0 0 7 7">
                          <path d="M3.500 0v7M0 3.500h7" stroke="#000" />
                        </Svg>
                      </PlusBox>
                    )}
                    {name}
                  </NameCell>
                  <ValueCell $current={i === 0}>
                    <PropValue text={value} />
                  </ValueCell>
                  <ExtraCell>{extra && <input type="checkbox" aria-label={`附加 ${name}`} />}</ExtraCell>
                </tr>
              ))}
            </tbody>
          </PropTable>
        </PropBox>
      </PropColumn>
    </Workspace>

    <StatusBar>
      <StatusField $width={148}>X=497387520 Y=517049760</StatusField>
      <StatusField $width={78}>层高:0.45m</StatusField>
      <StatusField $width={98}>底标高:-11.375m</StatusField>
      <StatusField $width={48}>0</StatusField>
      <StatusField>按鼠标左键指定第一个角点，或拾取构件图元</StatusField>
      <StatusField $width={70}>389.2 FPS</StatusField>
      <InputMethod>
        <Svg width="28" height="28" viewBox="0 0 28 28">
          <path d="M1 5L20 0q3 0 4 3l3 19q0 3-3 4L8 28q-3 0-4-3L0 8q0-2 1-3z" fill="#f4511e" />
          <path d="M20 7c-5-3-12-1-12 3s11 3 11 7-7 6-12 2" fill="none" stroke="#fff" strokeWidth="3.500" />
        </Svg>
        英
      </InputMethod>
    </StatusBar>
    <TaskBar>
      <span>20%</span>
      <span>17:05</span>
    </TaskBar>

    <MintBall />
    <MeterTab />
    <GaugeBall>68</GaugeBall>
  </Screen>
);

export default App;
